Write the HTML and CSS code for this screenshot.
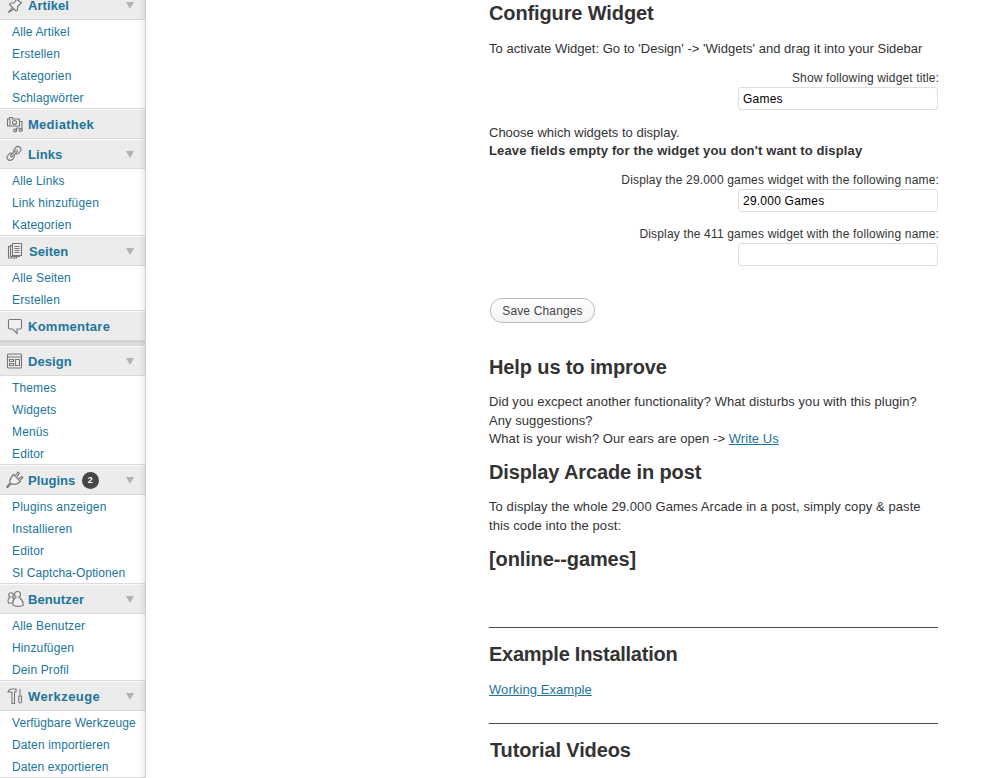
FILE: index.html
```html
<!DOCTYPE html>
<html lang="de">
<head>
<meta charset="utf-8">
<title>Configure Widget</title>
<link rel="stylesheet" href="styles.css">
</head>
<body>
<nav class="menu">
  <section>
    <h3 class="head head-first"><svg class="icon" viewBox="0 0 18 18"><path class="fill" d="M9 2l6.500 5-1.500 1-2.500 2.500V14L10 15 3.500 8.500 5 7h3l2-2.500zM6.500 11.500L2 16.500l6-3.500"/></svg><span>Artikel</span><i class="arrow"></i></h3>
    <ul><li><a>Alle Artikel</a></li><li><a>Erstellen</a></li><li><a>Kategorien</a></li><li><a>Schlagwörter</a></li></ul>
  </section>
  <section>
    <h3 class="head wide"><svg class="icon" viewBox="0 0 18 18"><path d="M1.500 4h2V2.500h3V4h7v7h-12zM4 4v7M10.500 13v3.500M10.500 13h3M16 6v10M13.500 6.500H16"/><circle cx="8.500" cy="7.500" r="2"/><circle cx="9" cy="15.500" r="1.400"/><circle cx="14.500" cy="15" r="1.400"/></svg><span>Mediathek</span></h3>
  </section>
  <section>
    <h3 class="head"><svg class="icon" viewBox="0 0 18 18"><g transform="rotate(-45 8 8.500)"><rect class="fill" x="-.5" y="5.500" width="7.500" height="6" rx="3"/><rect class="fill" x="9" y="5.500" width="7.500" height="6" rx="3"/><rect class="fill" x="3.500" y="7.500" width="9" height="2" rx="1"/></g></svg><span>Links</span><i class="arrow"></i></h3>
    <ul><li><a>Alle Links</a></li><li class="loose"><a>Link hinzufügen</a></li><li><a>Kategorien</a></li></ul>
  </section>
  <section>
    <h3 class="head head-pages"><svg class="icon" viewBox="0 0 18 18"><path d="M6.500 1.500h9v12h-9zM6.500 3.500h-2v11h9v-1M4.500 4.500h-2v11.500h8v-1M8.500 4.500h5M8.500 6.500h5M8.500 8.500h5M8.500 10.500h5"/></svg><span>Seiten</span><i class="arrow"></i></h3>
    <ul><li><a>Alle Seiten</a></li><li><a>Erstellen</a></li></ul>
  </section>
  <section>
    <h3 class="head wide"><svg class="icon" viewBox="0 0 18 18"><path class="fill" d="M4 2.500h10q1.500 0 1.500 1.500v6.500q0 1.500-1.500 1.500h-3v4.500L6.500 12H4q-1.500 0-1.500-1.500V4q0-1.500 1.500-1.500z"/></svg><span>Kommentare</span></h3>
  </section>
  <div class="separator"></div>
  <section>
    <h3 class="head"><svg class="icon" viewBox="0 0 18 18"><rect x="1.500" y="2" width="14" height="14" rx="1"/><path d="M2 5h13M3.500 7.500h4v2h-4zM3.500 11.500h4v2h-4zM9.500 7.500h4v6h-4z"/></svg><span>Design</span><i class="arrow"></i></h3>
    <ul><li><a>Themes</a></li><li><a>Widgets</a></li><li><a>Menüs</a></li><li><a>Editor</a></li></ul>
  </section>
  <section>
    <h3 class="head"><svg class="icon" viewBox="0 0 18 18"><path class="fill" d="M7.500 3.500l7 7q-5 4.500-9 2L1.500 16.500l-1-.5 3.500-4Q3 8 7.500 3.500z"/><path class="fill" d="M9 5l3-4 1.200 1L10.500 6.500M12 8.500l4-3 .8 1.200L13.500 9.700"/></svg><span>Plugins</span><b class="badge">2</b><i class="arrow"></i></h3>
    <ul><li class="loose"><a>Plugins anzeigen</a></li><li class="loose"><a>Installieren</a></li><li><a>Editor</a></li><li class="tight"><a>SI Captcha-Optionen</a></li></ul>
  </section>
  <section>
    <h3 class="head"><svg class="icon" viewBox="0 0 18 18"><circle class="fill" cx="5" cy="5" r="2.300"/><path class="fill" d="M4 7.500q-3 2-1.500 5.500H7l1-4-2-2"/><circle class="fill" cx="11.500" cy="4.500" r="3"/><path class="fill" d="M9.500 7.500q-3.500 3-2.500 7.500 4 2.500 10 .5 1-4-3.500-8"/></svg><span>Benutzer</span><i class="arrow"></i></h3>
    <ul><li><a>Alle Benutzer</a></li><li><a>Hinzufügen</a></li><li><a>Dein Profil</a></li></ul>
  </section>
  <section>
    <h3 class="head wider"><svg class="icon" viewBox="0 0 18 18"><path class="fill" d="M2 5q1-3 4-3h4v3H8.500v11.500H6V5H4zM14 2v6M12.800 9h2.700v6q-1.300 2-2.700 0z"/></svg><span>Werkzeuge</span><i class="arrow"></i></h3>
    <ul><li class="tight"><a>Verfügbare Werkzeuge</a></li><li><a>Daten importieren</a></li><li class="tight"><a>Daten exportieren</a></li></ul>
  </section>
</nav>
<main class="content">
  <h2>Configure Widget</h2>
  <p class="intro">To activate Widget: Go to 'Design' -&gt; 'Widgets' and drag it into your Sidebar</p>
  <label class="field field-title"><span>Show following widget title:</span><input type="text" value="Games"></label>
  <p class="choose">Choose which widgets to display.<br><strong>Leave fields empty for the widget you don't want to display</strong></p>
  <label class="field"><span>Display the 29.000 games widget with the following name:</span><input type="text" value="29.000 Games"></label>
  <label class="field"><span>Display the 411 games widget with the following name:</span><input type="text" value=""></label>
  <button class="save" type="button">Save Changes</button>
  <h2>Help us to improve</h2>
  <p class="help">Did you excpect another functionality? What disturbs you with this plugin?<br>Any suggestions?<br>What is your wish? Our ears are open -&gt; <a>Write Us</a></p>
  <h2>Display Arcade in post</h2>
  <p class="arcade">To display the whole 29.000 Games Arcade in a post, simply copy &amp; paste<br>this code into the post:</p>
  <h2 class="code">[online--games]</h2>
  <hr>
  <h2 class="installation">Example Installation</h2>
  <p class="example"><a>Working Example</a></p>
  <hr>
  <h2 class="videos">Tutorial Videos</h2>
</main>
</body>
</html>
```
FILE: styles.css
```css
* { box-sizing: border-box; }
body {
  margin: 0;
  height: 778px;
  overflow: hidden;
  display: flex;
  background: #fff;
  color: #333;
  font: 13px/18.5px "Liberation Sans", Arial, sans-serif;
}
h2, h3, p, ul { margin: 0; padding: 0; }
.menu {
  position: relative;
  flex: none;
  width: 146px;
  height: 778px;
  overflow: hidden;
  border-right: 1px solid #ccc;
}
.menu::after {
  content: "";
  position: absolute;
  inset: 0 0 0 auto;
  width: 6px;
  background: linear-gradient(to right, rgba(0,0,0,0), rgba(0,0,0,.07));
}
.head {
  height: 30px;
  display: flex;
  align-items: center;
  padding-left: 6px;
  border-top: 1px solid #f9f9f9;
  border-bottom: 1px solid #dadada;
  background: #ececec;
  color: #21759b;
  font-size: 13px;
  line-height: 18px;
  letter-spacing: .06px;
}
.head span { padding-top: 2px; }
.wide { letter-spacing: .27px; }
.wider { letter-spacing: .42px; }
.head-first { margin-top: -10px; }
.head-pages span { margin-left: 1px; }
.icon {
  width: 18px;
  height: 18px;
  margin-right: 4px;
  flex: none;
  fill: none;
  stroke: #777;
  stroke-width: 1.1;
}
.head-pages .icon { margin-top: -1px; }
.icon .fill { fill: #f1f1f1; }
.arrow {
  margin-left: auto;
  margin-right: 11px;
  border: 4px solid transparent;
  border-top: 7px solid #b2b2b2;
  border-bottom: 0;
}
.badge {
  width: 17px;
  height: 17px;
  margin: 1px 0 0 6.5px;
  border-radius: 50%;
  background: #464646;
  color: #fff;
  font-size: 9px;
  line-height: 17px;
  text-align: center;
}
.menu ul {
  list-style: none;
  padding: 1px 0 0 12px;
  box-shadow: inset 0 -1px #dcdcdc;
}
.menu li {
  height: 22px;
  font-size: 12px;
  line-height: 22px;
  letter-spacing: .14px;
  color: #21759b;
  white-space: nowrap;
}
.menu .loose { letter-spacing: .2px; }
.menu .tight { letter-spacing: .06px; }
.separator {
  height: 5px;
  background: #dcdcdc;
  border-top: 1px solid #ccc;
}
.content { width: 449px; margin-left: 343px; }
h2 { font-size: 20px; line-height: 26px; letter-spacing: -.12px; white-space: nowrap; }
p { white-space: nowrap; }
a { color: #21759b; }
.content a { text-decoration: underline; }
.intro { margin: 13.5px 0 11px; letter-spacing: .015px; }
.field {
  display: flex;
  flex-direction: column;
  align-items: flex-end;
  font-size: 12px;
  line-height: 18px;
  letter-spacing: .17px;
  margin: 0 0 13px;
}
.field span { margin-right: -1px; }
.field-title { letter-spacing: .13px; margin-bottom: 14px; }
.field input {
  width: 200px;
  height: 23px;
  margin: 0;
  padding: 0 4px;
  border: 1px solid #dfdfdf;
  border-radius: 3px;
  font: 12px "Liberation Sans", Arial, sans-serif;
  letter-spacing: .22px;
  color: #000;
}
.choose { line-height: 18px; margin-bottom: 11px; }
.choose strong { letter-spacing: .155px; }
.save {
  display: block;
  width: 105px;
  height: 25px;
  margin: 32px 0 31px 1px;
  padding: 0;
  border: 1px solid #bbb;
  border-radius: 12px;
  background: linear-gradient(#fff, #f2f2f2);
  color: #464646;
  font: 12px "Liberation Sans", Arial, sans-serif;
  letter-spacing: .15px;
}
.help { margin: 13px 0 10.5px; letter-spacing: .06px; }
.arcade { margin: 13px 0 11px; letter-spacing: .085px; }
.code { margin-bottom: 55px; }
hr { margin: 0 0 13px; border: 0; height: 1px; background: #4c4c4c; }
.installation { letter-spacing: -.25px; }
.example { margin: 14px 0 23.5px; letter-spacing: .08px; }
.videos { margin-left: 1px; }
```
